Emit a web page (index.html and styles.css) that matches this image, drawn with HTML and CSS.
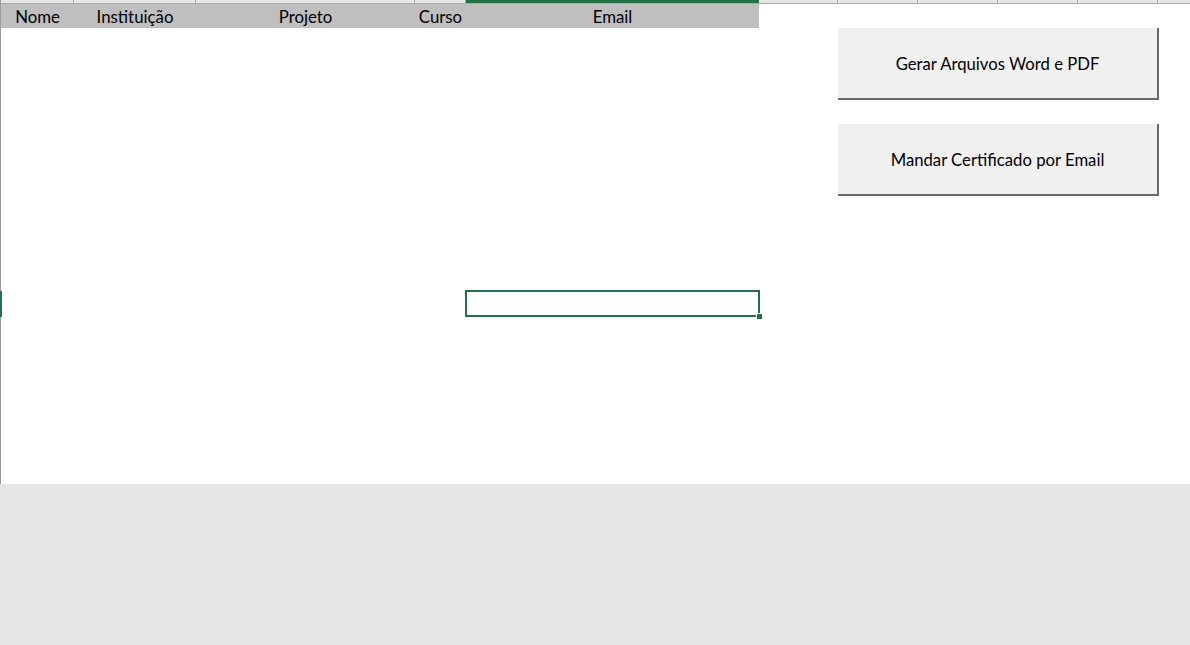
FILE: index.html
```html
<!DOCTYPE html>
<html lang="pt">
<head>
<meta charset="utf-8">
<link rel="stylesheet" href="styles.css">
</head>
<body>
<div class="app">
  <div class="sheet">
    <div class="colstrip">
      <div class="c"></div><div class="c"></div><div class="c"></div><div class="c"></div>
      <div class="c active"></div><div class="c"></div><div class="c"></div><div class="c"></div>
      <div class="c"></div><div class="c"></div><div class="c last"></div>
    </div>
    <div class="header">
      <div class="h">Nome</div>
      <div class="h">Instituição</div>
      <div class="h">Projeto</div>
      <div class="h">Curso</div>
      <div class="h">Email</div>
    </div>
    <div class="row-ind"></div>
    <div class="sel"><span class="handle"></span></div>
    <div class="controls">
      <button class="btn">Gerar Arquivos Word e PDF</button>
      <button class="btn">Mandar Certificado por Email</button>
    </div>
  </div>
  <div class="footer"></div>
</div>
</body>
</html>
```
FILE: styles.css
```css
* { box-sizing: border-box; }
html, body { margin: 0; padding: 0; }
body {
  width: 1190px;
  height: 645px;
  overflow: hidden;
  background: #e6e6e6;
  font-family: Lato, "Open Sans", sans-serif;
  color: #000;
}
.app { display: flex; flex-direction: column; height: 645px; }
.sheet {
  position: relative;
  height: 484px;
  background: #fff;
  border-left: 1px solid #9a9a9a;
}
.colstrip {
  display: grid;
  grid-template-columns: 73px 122px 219px 51px 293px 79px 80px 80px 80px 80px 32px;
  height: 4px;
  background: #e6e6e6;
  border-bottom: 1px solid #ababab;
}
.colstrip .c { border-right: 1px solid #ababab; }
.colstrip .c.last { border-right: none; }
.colstrip .c.active { background: #217346; border-right: none; height: 3px; }
.header {
  display: grid;
  grid-template-columns: 73px 122px 219px 51px 293px;
  height: 24px;
  background: #bfbfbf;
  width: 758px;
}
.h {
  font-size: 16.8px;
  line-height: 24px;
  padding-top: 1px;
  text-align: center;
  white-space: nowrap;
}
.row-ind {
  position: absolute;
  left: -1px;
  top: 291px;
  width: 2px;
  height: 26px;
  background: #217346;
}
.sel {
  position: absolute;
  left: 464px;
  top: 290px;
  width: 295px;
  height: 27px;
  border: 2px solid #217346;
}
.handle {
  position: absolute;
  right: -4px;
  bottom: -4px;
  width: 6px;
  height: 6px;
  background: #217346;
  border: 1px solid #fff;
  border-right: none;
  border-bottom: none;
}
.controls {
  position: absolute;
  left: 837px;
  top: 28px;
  display: flex;
  flex-direction: column;
  gap: 24px;
}
.btn {
  width: 321px;
  height: 72px;
  background: #f0f0f0;
  border: none;
  border-right: 2px solid #6b6b6b;
  border-bottom: 2px solid #6b6b6b;
  font-family: inherit;
  font-size: 16.7px;
  color: #000;
  padding: 2px 0 0 0;
}
.footer { flex: 1; background: #e6e6e6; }
```
